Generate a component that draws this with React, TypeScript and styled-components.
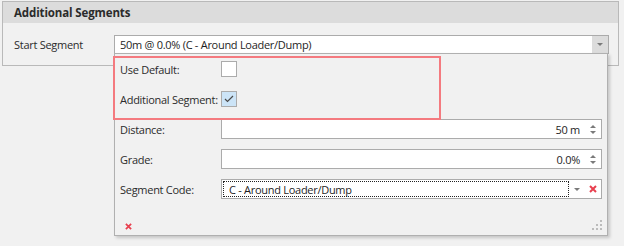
import React from "react";
import styled, { createGlobalStyle } from "styled-components";

const Global = createGlobalStyle`
  html, body { margin: 0; padding: 0; background: #f1f1f1; }
  body {
    font-family: "Open Sans", "Noto Sans", Arial, sans-serif;
    font-size: 11px;
    letter-spacing: -0.28px;
    color: #2b2b2b;
  }
  * { box-sizing: border-box; }
`;

const Page = styled.div`
  width: 624px;
  height: 246px;
  padding: 1px 5px 0 2px;
  position: relative;
`;

const Group = styled.section`
  border: 1px solid #b9b9b9;
  background: #f1f1f1;
`;

const GroupHeader = styled.div`
  height: 21px;
  background: #dcdcdc;
  padding-left: 11px;
  display: flex;
  align-items: center;
  font-weight: 700;
  font-size: 11.5px;
  letter-spacing: -0.12px;
  color: #2b2b2b;
`;

const GroupBody = styled.div`
  display: flex;
  align-items: center;
  padding: 12px 9px 11px 11px;
  position: relative;
`;

const Label = styled.span`
  color: #2b2b2b;
  white-space: nowrap;
`;

const StartLabel = styled(Label)`
  width: 100px;
  flex: none;
`;

const Combo = styled.div`
  flex: 1;
  height: 19px;
  border: 1px solid #ababab;
  background: #fff;
  display: flex;
  align-items: stretch;
`;

const ComboText = styled.div`
  flex: 1;
  padding-left: 5px;
  display: flex;
  align-items: center;
  color: #1e1e1e;
  white-space: nowrap;
`;

const ComboButton = styled.div<{ $bg?: string }>`
  width: 16px;
  flex: none;
  background: ${(p) => p.$bg || "transparent"};
  display: flex;
  align-items: center;
  justify-content: center;
`;

const Arrow = styled.span`
  width: 0;
  height: 0;
  border-left: 3.5px solid transparent;
  border-right: 3.5px solid transparent;
  border-top: 3.5px solid #7a7a7a;
`;

const Popup = styled.div`
  position: absolute;
  left: 114px;
  top: 53px;
  width: 494px;
  height: 183px;
  background: #f1f1f1;
  border: 1px solid #b0b0b0;
  box-shadow: 2px 2px 3px rgba(0, 0, 0, 0.18);
  display: flex;
  flex-direction: column;
  padding: 5px 5px 0 5px;
`;

const FormGrid = styled.div`
  display: grid;
  grid-template-columns: 101px 1fr;
  grid-auto-rows: 20px;
  row-gap: 10px;
  align-items: center;
`;

const Highlight = styled.div`
  position: absolute;
  left: -2px;
  top: 2px;
  width: 328px;
  height: 64px;
  border: 2px solid #f47a7f;
  pointer-events: none;
`;

const Check = styled.div<{ $checked?: boolean }>`
  width: 16px;
  height: 16px;
  border: 1px solid #ababab;
  background: ${(p) => (p.$checked ? "#cce4f7" : "#fff")};
  display: flex;
  align-items: center;
  justify-content: center;
`;

const Field = styled.div`
  height: 20px;
  border: 1px solid #ababab;
  background: #fff;
  display: flex;
  align-items: stretch;
`;

const FieldValue = styled.div<{ $right?: boolean; $dotted?: boolean }>`
  flex: 1;
  display: flex;
  align-items: center;
  justify-content: ${(p) => (p.$right ? "flex-end" : "flex-start")};
  padding: 0 4px 0 5px;
  margin: ${(p) => (p.$dotted ? "1px 0 1px 1px" : "0")};
  border: ${(p) => (p.$dotted ? "1px dotted #222" : "none")};
  color: #1e1e1e;
  white-space: nowrap;
`;

const Spin = styled.div`
  width: 17px;
  flex: none;
  display: flex;
  flex-direction: column;
  align-items: center;
  justify-content: center;
  gap: 3px;
`;

const SpinArrow = styled.span<{ $up?: boolean }>`
  width: 0;
  height: 0;
  border-left: 3.5px solid transparent;
  border-right: 3.5px solid transparent;
  ${(p) =>
    p.$up ? "border-bottom: 3.5px solid #7a7a7a;" : "border-top: 3.5px solid #7a7a7a;"}
`;

const Footer = styled.div`
  flex: 1;
  display: flex;
  align-items: flex-end;
  justify-content: space-between;
  padding: 0 0 5px 5px;
`;

const CloseX = ({ size = 8 }: { size?: number }) => (
  <svg width={size} height={size} viewBox="0 0 8 8">
    <path d="M1 1 L7 7 M7 1 L1 7" stroke="#e8404f" strokeWidth="2" />
  </svg>
);

const Grip = () => (
  <svg width="10" height="10" viewBox="0 0 10 10">
    {[
      [8, 0],
      [4, 4],
      [8, 4],
      [0, 8],
      [4, 8],
      [8, 8],
    ].map(([x, y], i) => (
      <rect key={i} x={x} y={y} width="2" height="2" fill="#bcbcbc" />
    ))}
  </svg>
);

const CheckMark = () => (
  <svg width="10" height="8" viewBox="0 0 10 8">
    <path d="M1 4 L3.5 6.5 L9 1" stroke="#4a4a4a" strokeWidth="1.2" fill="none" />
  </svg>
);

const XBox = styled.div`
  width: 16px;
  display: flex;
  align-items: center;
  justify-content: center;
`;

export default function App() {
  return (
    <>
      <Global />
      <Page>
        <Group>
          <GroupHeader>Additional Segments</GroupHeader>
          <GroupBody>
            <StartLabel>Start Segment</StartLabel>
            <Combo>
              <ComboText>50m @ 0.0% (C - Around Loader/Dump)</ComboText>
              <ComboButton $bg="#dcdcdc">
                <Arrow />
              </ComboButton>
            </Combo>
          </GroupBody>
        </Group>
        <Popup>
          <Highlight />
          <FormGrid>
            <Label>Use Default:</Label>
            <Check />
            <Label>Additional Segment:</Label>
            <Check $checked>
              <CheckMark />
            </Check>
            <Label>Distance:</Label>
            <Field>
              <FieldValue $right>50 m</FieldValue>
              <Spin>
                <SpinArrow $up />
                <SpinArrow />
              </Spin>
            </Field>
            <Label>Grade:</Label>
            <Field>
              <FieldValue $right>0.0%</FieldValue>
              <Spin>
                <SpinArrow $up />
                <SpinArrow />
              </Spin>
            </Field>
            <Label>Segment Code:</Label>
            <Field>
              <FieldValue $dotted>C - Around Loader/Dump</FieldValue>
              <ComboButton>
                <Arrow />
              </ComboButton>
              <XBox>
                <CloseX />
              </XBox>
            </Field>
          </FormGrid>
          <Footer>
            <CloseX size={7} />
            <Grip />
          </Footer>
        </Popup>
      </Page>
    </>
  );
}
